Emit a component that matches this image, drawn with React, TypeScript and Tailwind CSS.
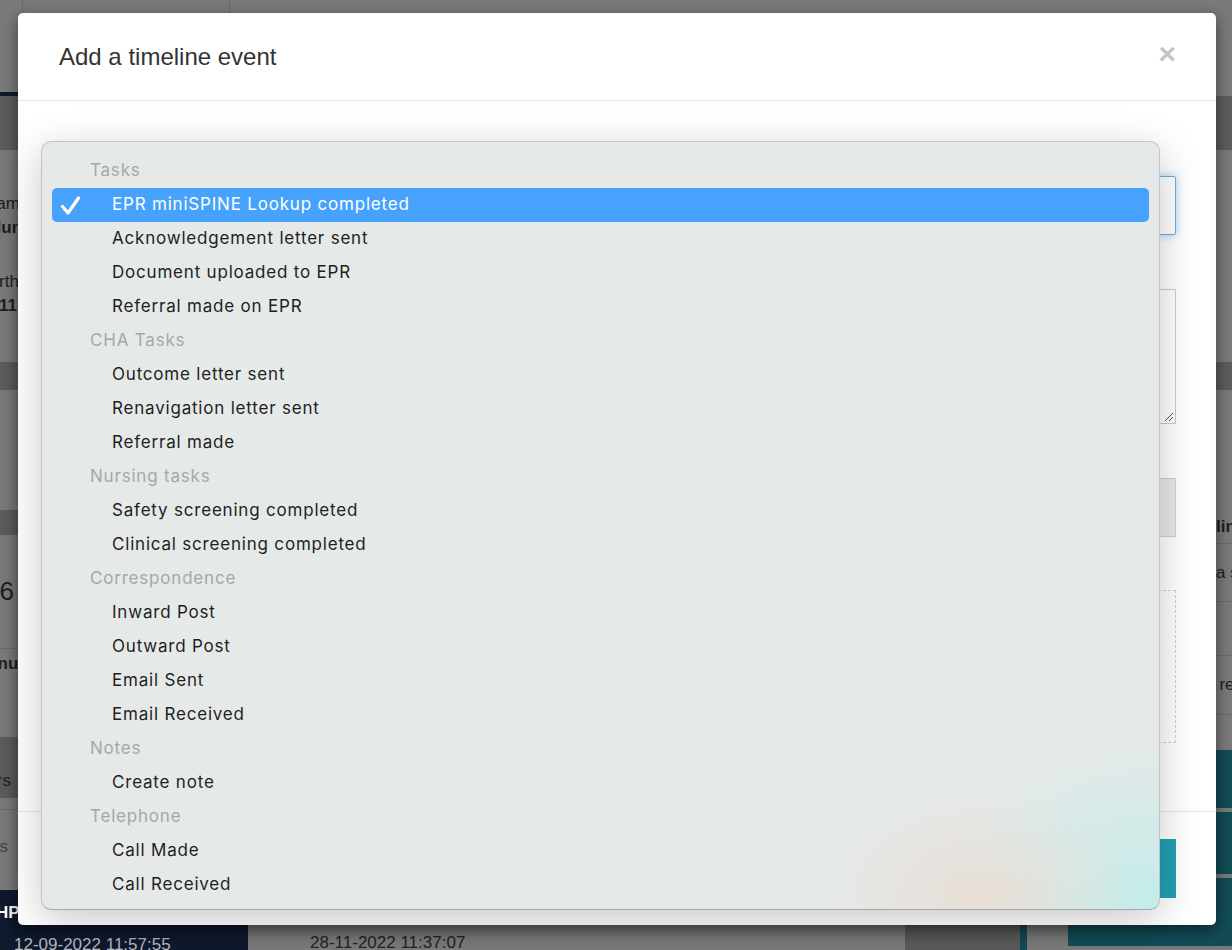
type Row = { label: string; group?: boolean; selected?: boolean };

const rows: Row[] = [
  { label: "Tasks", group: true },
  { label: "EPR miniSPINE Lookup completed", selected: true },
  { label: "Acknowledgement letter sent" },
  { label: "Document uploaded to EPR" },
  { label: "Referral made on EPR" },
  { label: "CHA Tasks", group: true },
  { label: "Outcome letter sent" },
  { label: "Renavigation letter sent" },
  { label: "Referral made" },
  { label: "Nursing tasks", group: true },
  { label: "Safety screening completed" },
  { label: "Clinical screening completed" },
  { label: "Correspondence", group: true },
  { label: "Inward Post" },
  { label: "Outward Post" },
  { label: "Email Sent" },
  { label: "Email Received" },
  { label: "Notes", group: true },
  { label: "Create note" },
  { label: "Telephone", group: true },
  { label: "Call Made" },
  { label: "Call Received" },
];

function BackgroundPage() {
  return (
    <div className="flex h-[950px] flex-col bg-[#7a7a7a] font-['Liberation_Sans',Arial,sans-serif] text-[17px] text-[#1e1e1e]">
      <div className="flex h-[96px] shrink-0">
        <div className="w-[23px] border-r border-[#6a6a6a] border-b-4 border-b-[#101a2c]" />
        <div className="w-[207px] border-r border-[#6a6a6a]" />
        <div className="flex-1" />
      </div>
      <div className="h-[54px] shrink-0 bg-[#5c5c5c]" />
      <div className="flex flex-1">
        <div className="flex w-[248px] flex-col">
          <div className="flex h-[212px] flex-col pt-[42px]">
            <span className="-ml-[16px] leading-[24px]">Name</span>
            <span className="-ml-[11px] font-bold leading-[24px]">Hunter</span>
            <span className="-ml-[16px] mt-[30px] leading-[24px]">Birth</span>
            <span className="-ml-[1px] font-bold leading-[24px]">11-11-1950</span>
          </div>
          <div className="h-[28px] bg-[#5c5c5c]" />
          <div className="h-[120px]" />
          <div className="h-[25px] bg-[#5c5c5c]" />
          <div className="flex h-[113px] items-center -ml-[15px]">
            <span className="text-[26px]">16</span>
          </div>
          <div className="flex h-[89px] border-t border-[#6a6a6a] pt-[2px] -ml-[26px]">
            <span className="font-bold">Menu</span>
          </div>
          <div className="flex h-[61px] items-center bg-[#5c5c5c] -ml-[40px] pt-[26px]">
            <span>Others</span>
          </div>
          <div className="flex h-[92px] flex-col">
            <div className="h-[12px] border-b border-[#6a6a6a]" />
            <span className="mt-[24px] -ml-[61px] text-[#444]">Referrals</span>
          </div>
          <div className="flex flex-1 flex-col bg-[#0f1a2e]">
            <span className="mt-[10px] -ml-[4px] font-bold text-white">HP</span>
            <span className="mt-[6px] pl-[14px] text-[#b6bbc4]">12-09-2022 11:57:55</span>
          </div>
        </div>
        <div className="flex flex-1 flex-col">
          <div className="flex-1" />
          <div className="flex h-[40px] items-end pb-[2px]">
            <span className="ml-[62px] text-[#222]">28-11-2022 11:37:07</span>
            <div className="ml-auto h-full w-[115px] bg-[#5a5a5a]" />
            <div className="h-full w-[7px] bg-[#114b56]" />
            <div className="h-full w-[41px]" />
          </div>
        </div>
        <div className="flex w-[164px] flex-col">
          <div className="h-[212px]" />
          <div className="h-[28px] bg-[#5c5c5c]" />
          <div className="flex h-[153px] flex-col justify-end pl-[148px]">
            <span className="pb-[4px] font-bold whitespace-nowrap">line</span>
          </div>
          <div className="flex h-[58px] items-center border-t border-[#6a6a6a] pl-[148px] whitespace-nowrap">
            a summary
          </div>
          <div className="h-[54px] border-t border-[#6a6a6a]" />
          <div className="flex h-[59px] items-center border-t border-[#6a6a6a] pl-[142px] whitespace-nowrap">
            t received
          </div>
          <div className="h-[36px] border-t border-[#6a6a6a]" />
          <div className="h-[58px] bg-[#124c57]" />
          <div className="h-[4px] bg-[#7a7a7a]" />
          <div className="h-[62px] bg-[#124c57]" />
          <div className="h-[4px] bg-[#7a7a7a]" />
          <div className="h-[68px] bg-[#124c57]" />
          <div className="flex-1" />
        </div>
      </div>
    </div>
  );
}

function Modal() {
  return (
    <div className="absolute left-[18px] top-[13px] flex h-[912px] w-[1198px] flex-col rounded-[5px] bg-white font-['Liberation_Sans',Arial,sans-serif] shadow-[0_5px_15px_rgba(0,0,0,0.5)]">
      <div className="flex h-[88px] shrink-0 items-center justify-between border-b border-[#e5e5e5] pl-[41px] pr-[40px]">
        <h4 className="text-[24px] leading-none text-[#333]">Add a timeline event</h4>
        <span className="-mt-[6px] text-[30px] font-bold leading-none text-[#c4c4c4]">×</span>
      </div>
      <div className="flex flex-1 flex-col px-[40px] pt-[75px]">
        <div className="h-[59px] rounded-[2px] border border-[#66afe9] shadow-[0_0_8px_rgba(102,175,233,0.6)]" />
        <div className="mt-[54px] relative h-[135px] border border-[#ccc]">
          <svg className="absolute bottom-[1px] right-[1px]" width="12" height="12" viewBox="0 0 12 12">
            <path d="M11 3 L3 11 M11 7 L7 11" stroke="#555" strokeWidth="1" />
          </svg>
        </div>
        <div className="mt-[54px] h-[59px] border border-[#cfcfcf] bg-[#e8e8e8]" />
        <div className="mt-[53px] h-[153px] border border-dashed border-[#cfcfcf]" />
      </div>
      <div className="flex h-[114px] shrink-0 items-center justify-end border-t border-[#e5e5e5] px-[40px]">
        <button className="h-[59px] w-[220px] bg-[#23a0b4] text-[17px] text-white">Save</button>
      </div>
    </div>
  );
}

function SelectPopup() {
  return (
    <div className="absolute left-[41px] top-[141px] h-[769px] w-[1119px] rounded-[10px] border border-[#c2c4c4] border-b-[#a6a8a8] bg-[#e5e9e8] bg-[radial-gradient(ellipse_150px_100px_at_84%_98%,rgba(232,222,214,1),rgba(229,233,232,0)),radial-gradient(ellipse_220px_170px_at_100%_100%,rgba(194,236,233,1),rgba(229,233,232,0))] pt-[12px] font-['Inter','Noto_Sans',sans-serif] text-[17px] tracking-[0.8px] shadow-[0_10px_40px_rgba(0,0,0,0.22)]">
      {rows.map((row) => (
        <div
          key={row.label}
          className={
            row.selected
              ? "relative mx-[10px] flex h-[34px] items-center rounded-[5px] bg-[#46a2fd] pl-[60px] text-white"
              : row.group
              ? "mx-[10px] flex h-[34px] items-center pl-[38px] text-[#a5a8a8]"
              : "mx-[10px] flex h-[34px] items-center pl-[60px] text-[#1f1f1f]"
          }
        >
          {row.selected && (
            <svg className="absolute left-[8px] top-[7px]" width="21" height="21" viewBox="0 0 21 21">
              <path
                d="M2.5 11.5 L8 18 L18.5 3"
                fill="none"
                stroke="white"
                strokeWidth="3.2"
                strokeLinecap="round"
                strokeLinejoin="round"
              />
            </svg>
          )}
          {row.label}
        </div>
      ))}
    </div>
  );
}

export default function App() {
  return (
    <div className="relative h-[950px] w-full overflow-hidden">
      <BackgroundPage />
      <Modal />
      <SelectPopup />
    </div>
  );
}
